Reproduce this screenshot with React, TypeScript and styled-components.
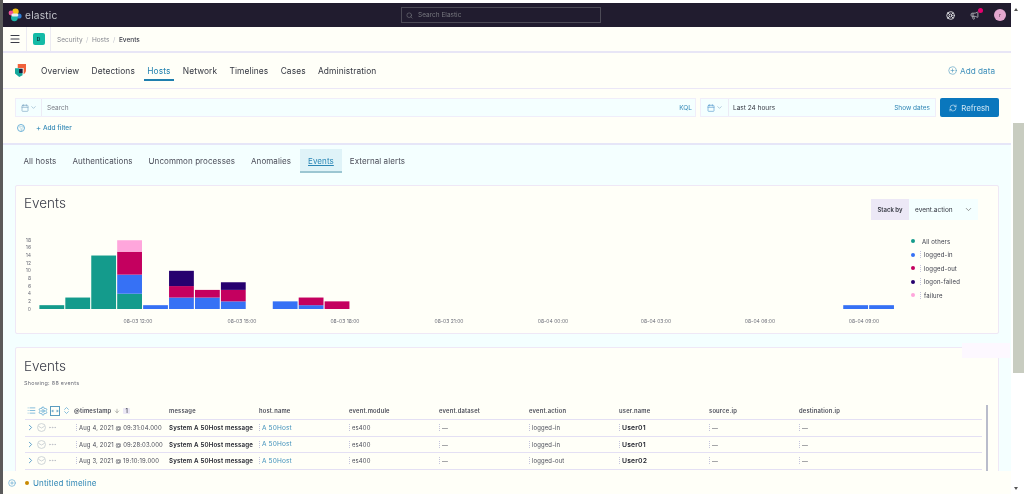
import { ChevronDown, ChevronRight, Menu, Search, Plus, RefreshCw, Calendar, ArrowDown, MoreHorizontal, Settings, ChevronsUpDown, List, Filter, CirclePlus, LifeBuoy, Megaphone } from 'lucide-react';
import styled, { createGlobalStyle } from 'styled-components';

const GlobalStyle = createGlobalStyle`
  html, body {
    margin: 0;
    height: 100%;
    overflow: hidden;
    background: #ffffff;
  }
  #root {
    height: 100%;
  }
  * {
    box-sizing: border-box;
  }
`;

const navLinks = ['Overview', 'Detections', 'Hosts', 'Network', 'Timelines', 'Cases', 'Administration'];
const tabs = ['All hosts', 'Authentications', 'Uncommon processes', 'Anomalies', 'Events', 'External alerts'];

const palette = {
  teal: '#149b8c',
  blue: '#3671f5',
  crimson: '#c4005f',
  navy: '#26006f',
  pink: '#ffa6dc',
};

type Segment = [keyof typeof palette, number];

const histogram: { slot: number; parts: Segment[] }[] = [
  { slot: 0, parts: [['teal', 1]] },
  { slot: 1, parts: [['teal', 3]] },
  { slot: 2, parts: [['teal', 14]] },
  { slot: 3, parts: [['teal', 4], ['blue', 5], ['crimson', 6], ['pink', 3]] },
  { slot: 4, parts: [['blue', 1]] },
  { slot: 5, parts: [['blue', 3], ['crimson', 3], ['navy', 4]] },
  { slot: 6, parts: [['blue', 3], ['crimson', 2]] },
  { slot: 7, parts: [['blue', 2], ['crimson', 3], ['navy', 2]] },
  { slot: 9, parts: [['blue', 2]] },
  { slot: 10, parts: [['blue', 1], ['crimson', 2]] },
  { slot: 11, parts: [['crimson', 2]] },
  { slot: 31, parts: [['blue', 1]] },
  { slot: 32, parts: [['blue', 1]] },
];

const xTicks = [
  ['08-03 12:00', 122],
  ['08-03 15:00', 226],
  ['08-03 18:00', 329],
  ['08-03 21:00', 433],
  ['08-04 00:00', 537],
  ['08-04 03:00', 640],
  ['08-04 06:00', 744],
  ['08-04 09:00', 848],
] as const;

const legend: { color: keyof typeof palette; label: string; plain?: boolean }[] = [
  { color: 'teal', label: 'All others', plain: true },
  { color: 'blue', label: 'logged-in' },
  { color: 'crimson', label: 'logged-out' },
  { color: 'navy', label: 'logon-failed' },
  { color: 'pink', label: 'failure' },
];

const columns = ['message', 'host.name', 'event.module', 'event.dataset', 'event.action', 'user.name', 'source.ip', 'destination.ip'];

const rows = [
  { time: 'Aug 4, 2021 @ 09:31:04.000', action: 'logged-in', user: 'User01' },
  { time: 'Aug 4, 2021 @ 09:28:03.000', action: 'logged-in', user: 'User01' },
  { time: 'Aug 3, 2021 @ 19:10:19.000', action: 'logged-out', user: 'User02' },
];

const ElasticMark = () => (
  <svg width="14" height="14" viewBox="0 0 14 14">
    <circle cx="7.5" cy="3.6" r="3.2" fill="#f5c518" />
    <circle cx="3" cy="5" r="2.4" fill="#ee5097" />
    <circle cx="11" cy="8" r="2.6" fill="#2f7fd6" />
    <circle cx="6.4" cy="9.8" r="3.4" fill="#1bb5a8" />
    <rect x="3.4" y="5.4" width="7" height="3" rx="1.5" fill="#e8edf0" />
  </svg>
);

const SecurityMark = () => (
  <svg width="11" height="13" viewBox="0 0 12 14">
    <path d="M3 0h9v6.5c0 2.2-1 3.6-2.6 4.6V4.2H3z" fill="#f0613a" />
    <path d="M0 4.6h4.4v5.2h3.8v2.4L4.6 14 0 10.2z" fill="#14a89c" />
    <rect x="4.4" y="5" width="4" height="4.8" fill="#1a1c3a" />
  </svg>
);

const ExpandBox = () => (
  <svg width="10" height="10" viewBox="0 0 10 10" fill="none" stroke="#5a9cc0" strokeWidth="1">
    <rect x="0.5" y="0.5" width="9" height="9" />
    <path d="M2 5h2M2.8 3.8 1.8 5l1 1.2M8 5H6M7.2 3.8 8.2 5l-1 1.2" strokeWidth="0.8" />
  </svg>
);

const EventIcon = () => (
  <svg width="9" height="9" viewBox="0 0 10 10" fill="none" stroke="#c3cbd0" strokeWidth="0.9">
    <circle cx="5" cy="5" r="4.4" />
    <path d="M1.6 3.6 5 5.6l3.4-2" />
  </svg>
);

const HitsChart = () => {
  const slotWidth = 25.93;
  const unit = 3.82;
  const baseY = 87;

  return (
    <svg width="890" height="104" viewBox="0 0 890 104">
      {[0, 2, 4, 6, 8, 10, 12, 14, 16, 18].map((tick) => (
        <ChartLabel key={tick} x="15" y={baseY + 1.5 - tick * unit} textAnchor="end">
          {tick}
        </ChartLabel>
      ))}
      {histogram.map(({ slot, parts }) => {
        let top = baseY;
        return parts.map(([color, count]) => {
          const h = count * unit;
          top -= h;
          return (
            <rect
              key={`${slot}-${color}`}
              x={23.4 + slot * slotWidth}
              y={top}
              width={24.8}
              height={h}
              fill={palette[color]}
            />
          );
        });
      })}
      {xTicks.map(([label, x]) => (
        <ChartLabel key={label} x={x} y="100.5" textAnchor="middle">
          {label}
        </ChartLabel>
      ))}
    </svg>
  );
};

const App = () => {
  return (
    <Page>
      <GlobalStyle />
      <Column>
        <TopBar>
          <Brand>
            <ElasticMark />
            <BrandName>elastic</BrandName>
          </Brand>
          <GlobalSearch>
            <Search size={7} color="#77787f" />
            <span>Search Elastic</span>
          </GlobalSearch>
          <TopIcons>
            <LifeBuoy size={9} color="#d8d8dc" strokeWidth={2.6} />
            <NewsIcon>
              <Megaphone size={9} color="#a6a6ac" strokeWidth={2.6} />
              <Badge />
            </NewsIcon>
            <Avatar>r</Avatar>
          </TopIcons>
        </TopBar>

        <CrumbBar>
          <MenuCell>
            <Menu size={12} color="#3a3c48" strokeWidth={2.2} />
          </MenuCell>
          <SpaceCell>
            <SpaceBadge>D</SpaceBadge>
          </SpaceCell>
          <Crumbs>
            <Crumb>Security</Crumb>
            <Slash>/</Slash>
            <Crumb>Hosts</Crumb>
            <Slash>/</Slash>
            <Crumb $current>Events</Crumb>
          </Crumbs>
        </CrumbBar>

        <NavBar>
          <SecurityMark />
          <NavLinks>
            {navLinks.map((link) => (
              <NavLink key={link} $active={link === 'Hosts'}>
                {link}
              </NavLink>
            ))}
          </NavLinks>
          <AddData>
            <CirclePlus size={9} strokeWidth={1.5} />
            Add data
          </AddData>
        </NavBar>

        <QueryPanel>
          <QueryRow>
            <SearchField>
              <FieldPrefix>
                <Calendar size={8} color="#7fa8c4" />
                <ChevronDown size={7} color="#7fa8c4" />
              </FieldPrefix>
              <Placeholder>Search</Placeholder>
              <Kql>KQL</Kql>
            </SearchField>
            <DateField>
              <DatePrefix>
                <Calendar size={8} color="#5d9fd0" />
                <ChevronDown size={7} color="#7fa8c4" />
              </DatePrefix>
              <DateText>Last 24 hours</DateText>
              <ShowDates>Show dates</ShowDates>
            </DateField>
            <RefreshButton>
              <RefreshCw size={8} />
              Refresh
            </RefreshButton>
          </QueryRow>
          <FilterRow>
            <FilterIcon>
              <Filter size={5} />
            </FilterIcon>
            <AddFilter>
              <Plus size={5} strokeWidth={3} />
              Add filter
            </AddFilter>
          </FilterRow>
        </QueryPanel>

        <Content>
          <TabRow>
            {tabs.map((tab) => (
              <Tab key={tab} $active={tab === 'Events'}>
                {tab}
              </Tab>
            ))}
          </TabRow>

          <ChartCard>
            <CardHead>
              <CardTitle>Events</CardTitle>
              <StackSelect>
                <StackLabel>Stack by</StackLabel>
                <StackValue>
                  event.action
                  <ChevronDown size={9} color="#777" />
                </StackValue>
              </StackSelect>
            </CardHead>
            <ChartRow>
              <HitsChart />
              <Legend>
                {legend.map(({ color, label, plain }) => (
                  <LegendItem key={label}>
                    <Dot $color={palette[color]} />
                    {!plain && <LegendGrip />}
                    {label}
                  </LegendItem>
                ))}
              </Legend>
            </ChartRow>
          </ChartCard>

          <TableCard>
            <CardTitle>Events</CardTitle>
            <Showing>Showing: 88 events</Showing>
            <TableWrap>
              <Table>
                <HeadRow>
                  <Tools>
                    <List size={9} color="#5fa8d3" />
                    <Settings size={10} color="#5fa8d3" />
                    <ExpandBox />
                    <ChevronsUpDown size={9} color="#5fa8d3" />
                  </Tools>
                  <SortCell>
                    @timestamp
                    <ArrowDown size={6} color="#777" />
                    <SortCount>1</SortCount>
                  </SortCell>
                  {columns.map((col) => (
                    <HeadCell key={col}>{col}</HeadCell>
                  ))}
                </HeadRow>
                {rows.map((row) => (
                  <Row key={row.time}>
                    <RowTools>
                      <ChevronRight size={9} color="#4d97c6" strokeWidth={2.4} />
                      <EventIcon />
                      <MoreHorizontal size={9} color="#b9bcc4" />
                    </RowTools>
                    <TimeCell>
                      <Grip />
                      {row.time}
                    </TimeCell>
                    <MessageCell>System A 50Host message</MessageCell>
                    <Cell>
                      <Grip />
                      <HostLink>A 50Host</HostLink>
                    </Cell>
                    <Cell>
                      <Grip />
                      es400
                    </Cell>
                    <Cell>
                      <Grip />—
                    </Cell>
                    <Cell>
                      <Grip />
                      {row.action}
                    </Cell>
                    <Cell>
                      <Grip />
                      <UserName>{row.user}</UserName>
                    </Cell>
                    <Cell>
                      <Grip />—
                    </Cell>
                    <Cell>
                      <Grip />—
                    </Cell>
                  </Row>
                ))}
              </Table>
              <TableScroll />
            </TableWrap>
          </TableCard>
          <CornerPatch />
        </Content>

        <TimelineBar>
          <CirclePlus size={8} color="#5fa8d3" />
          <StatusDot />
          <TimelineName>Untitled timeline</TimelineName>
        </TimelineBar>
      </Column>

      <Scrollbar>
        <ArrowUp />
        <Thumb />
        <ArrowDownMark />
      </Scrollbar>
    </Page>
  );
};

const Page = styled.div`
  display: flex;
  width: 1024px;
  height: 494px;
  overflow: hidden;
  padding-top: 3px;
  border-left: 3px solid #5a5a5a;
  background: #ffffff;
  font-family: Inter, 'Liberation Sans', sans-serif;
  color: #343741;
  filter: blur(0.35px);
`;

const Column = styled.div`
  display: flex;
  flex-direction: column;
  width: 1008px;
  height: 491px;
`;

const TopBar = styled.header`
  flex: 0 0 24px;
  display: grid;
  grid-template-columns: 393px 200px 1fr;
  align-items: center;
  padding: 0 5px 0 5px;
  background: #211c2f;
`;

const Brand = styled.div`
  display: flex;
  align-items: center;
  gap: 3px;
`;

const BrandName = styled.span`
  font-size: 10.2px;
  color: #c4c5cc;
  letter-spacing: 0.2px;
`;

const GlobalSearch = styled.div`
  display: flex;
  align-items: center;
  gap: 5px;
  height: 16px;
  padding-left: 4px;
  border: 1px solid #4c4a56;
  background: #211c2f;
  font-size: 6.5px;
  color: #77787f;
`;

const TopIcons = styled.div`
  display: flex;
  align-items: center;
  justify-content: flex-end;
  gap: 15px;
`;

const NewsIcon = styled.span`
  position: relative;
  display: flex;
`;

const Badge = styled.span`
  position: absolute;
  top: -3px;
  right: -4px;
  width: 5px;
  height: 5px;
  border-radius: 50%;
  background: #e6006e;
`;

const Avatar = styled.span`
  display: flex;
  align-items: center;
  justify-content: center;
  width: 12px;
  height: 12px;
  border-radius: 50%;
  background: #e3a6cf;
  font-size: 5px;
  color: #4a3040;
`;

const CrumbBar = styled.div`
  flex: 0 0 26px;
  display: flex;
  align-items: stretch;
  border-bottom: 2px solid #e8e6f6;
  background: #fffff8;
`;

const MenuCell = styled.div`
  display: flex;
  align-items: center;
  justify-content: center;
  width: 24px;
  border-right: 1px solid #ecebf2;
`;

const SpaceCell = styled.div`
  display: flex;
  align-items: center;
  justify-content: center;
  width: 24px;
  border-right: 1px solid #ecebf2;
`;

const SpaceBadge = styled.span`
  display: flex;
  align-items: center;
  justify-content: center;
  width: 12px;
  height: 12px;
  border-radius: 2px;
  background: #14bba6;
  font-size: 5px;
  font-weight: 600;
  color: #123;
`;

const Crumbs = styled.div`
  display: flex;
  align-items: center;
  gap: 3.5px;
  padding: 2px 0 0 6px;
  font-size: 6.5px;
`;

const Crumb = styled.span<{ $current?: boolean }>`
  color: ${(p) => (p.$current ? '#3a3c48' : '#85878f')};
  font-weight: ${(p) => (p.$current ? 500 : 400)};
`;

const Slash = styled.span`
  color: #c4c6cf;
`;

const NavBar = styled.nav`
  flex: 0 0 36px;
  display: flex;
  align-items: center;
  padding: 0 16px 0 12px;
  border-bottom: 1px solid #ebe7f7;
  background: #fffff8;
`;

const NavLinks = styled.div`
  display: flex;
  align-items: center;
  gap: 10.3px;
  margin-left: 14px;
  flex: 1;
`;

const NavLink = styled.span<{ $active: boolean }>`
  position: relative;
  padding: 0 1px;
  font-size: 8.4px;
  letter-spacing: 0.1px;
  color: ${(p) => (p.$active ? '#1f7fae' : '#343741')};

  &::after {
    content: '';
    display: ${(p) => (p.$active ? 'block' : 'none')};
    position: absolute;
    left: -2px;
    right: -2px;
    bottom: -5px;
    height: 1.3px;
    background: #1f7fae;
  }
`;

const AddData = styled.span`
  display: flex;
  align-items: center;
  gap: 3px;
  font-size: 8.2px;
  color: #3f90bb;
`;

const QueryPanel = styled.div`
  flex: 0 0 56px;
  padding: 9px 12px 0 12px;
  border-bottom: 2px solid #e6e6f8;
  background: #fffff8;
`;

const QueryRow = styled.div`
  display: flex;
  gap: 4px;
  height: 19px;
`;

const SearchField = styled.div`
  display: flex;
  align-items: center;
  width: 681px;
  padding-right: 3px;
  border: 1px solid #f0eefa;
  background: #f4ffff;
`;

const FieldPrefix = styled.div`
  display: flex;
  align-items: center;
  justify-content: center;
  gap: 1px;
  align-self: stretch;
  width: 26px;
  border-right: 1px solid #ecebf5;
`;

const DatePrefix = styled(FieldPrefix)`
  width: 28px;
`;

const Placeholder = styled.span`
  flex: 1;
  padding-left: 5px;
  font-size: 6.5px;
  color: #7a7c85;
`;

const Kql = styled.span`
  font-size: 6.5px;
  color: #2f86b5;
`;

const DateField = styled.div`
  display: flex;
  align-items: center;
  width: 236px;
  padding-right: 5px;
  border: 1px solid #f0eefa;
  background: #f4ffff;
`;

const DateText = styled.span`
  flex: 1;
  padding-left: 4px;
  font-size: 6.5px;
  color: #343741;
`;

const ShowDates = styled.span`
  font-size: 6.5px;
  color: #2f86b5;
`;

const RefreshButton = styled.div`
  display: flex;
  align-items: center;
  justify-content: center;
  gap: 4px;
  width: 59px;
  border-radius: 2px;
  background: #0a77bd;
  font-size: 7.8px;
  color: #cfe6f4;
`;

const FilterRow = styled.div`
  display: flex;
  align-items: center;
  gap: 11px;
  margin-top: 7px;
  padding-left: 2px;
`;

const FilterIcon = styled.span`
  display: flex;
  align-items: center;
  justify-content: center;
  width: 8px;
  height: 8px;
  border: 1px solid #6fb3d9;
  border-radius: 50%;
  color: #6fb3d9;
`;

const AddFilter = styled.span`
  display: flex;
  align-items: center;
  gap: 2px;
  font-size: 6.5px;
  font-weight: 500;
  color: #2f86b5;
`;

const Content = styled.main`
  position: relative;
  flex: 1;
  min-height: 0;
  overflow: hidden;
  padding: 4px 12px 0 12px;
  background: #f4ffff;
`;

const TabRow = styled.div`
  display: flex;
  height: 24px;
  padding-left: 1px;
`;

const Tab = styled.span<{ $active: boolean }>`
  display: flex;
  align-items: center;
  padding: 1px ${(p) => (p.$active ? '8.5px' : '7.5px')} 0;
  margin-right: ${(p) => (p.$active ? '0' : '1px')};
  border-bottom: 2px solid ${(p) => (p.$active ? '#9cc6d2' : 'transparent')};
  background: ${(p) => (p.$active ? '#dff3f8' : 'transparent')};
  font-size: 8px;
  letter-spacing: 0.08px;
  color: ${(p) => (p.$active ? '#2a86b5' : '#4a4c58')};
  text-decoration: ${(p) => (p.$active ? 'underline' : 'none')};
`;

const ChartCard = styled.section`
  height: 149px;
  margin-top: 12px;
  padding: 8px 0 0 8px;
  border: 1px solid #efe8f6;
  border-radius: 2px;
  background: #fffff8;
`;

const CardHead = styled.div`
  display: flex;
  align-items: flex-start;
  justify-content: space-between;
  padding-right: 20px;
`;

const CardTitle = styled.h2`
  margin: 0;
  font-size: 13.5px;
  font-weight: 300;
  line-height: 18px;
  color: #3a3c48;
`;

const StackSelect = styled.div`
  display: flex;
  height: 21px;
  width: 107px;
  margin-top: 5px;
  background: #f4ffff;
`;

const StackLabel = styled.span`
  display: flex;
  align-items: center;
  justify-content: center;
  width: 38px;
  background: #ece8f6;
  font-size: 6px;
  font-weight: 600;
  color: #343741;
`;

const StackValue = styled.span`
  flex: 1;
  display: flex;
  align-items: center;
  justify-content: space-between;
  padding: 0 5px 0 6px;
  font-size: 6.5px;
  color: #343741;
`;

const ChartRow = styled.div`
  display: flex;
  margin: 2px 0 0 -8px;
`;

const ChartLabel = styled.text`
  font-family: Inter, 'Liberation Sans', sans-serif;
  font-size: 5px;
  fill: #6b6d78;
`;

const Legend = styled.ul`
  display: flex;
  flex-direction: column;
  gap: 5.5px;
  margin: 0 0 0 5px;
  padding: 15px 0 0 0;
  list-style: none;
`;

const LegendItem = styled.li`
  display: flex;
  align-items: center;
  height: 8px;
  font-size: 6px;
  letter-spacing: 0.15px;
  color: #3a3c48;
`;

const Dot = styled.span<{ $color: string }>`
  width: 4px;
  height: 4px;
  margin-right: 7px;
  border-radius: 50%;
  background: ${(p) => p.$color};
`;

const Grip = styled.span`
  flex: none;
  width: 1px;
  height: 7px;
  margin-right: 2px;
  border-left: 1px dotted #c4c4dc;
`;

const LegendGrip = styled(Grip)`
  margin-left: -2px;
  margin-right: 3px;
`;

const TableCard = styled.section`
  height: 140px;
  margin-top: 13px;
  padding: 9px 0 0 8px;
  border: 1px solid #efe8f6;
  border-radius: 2px;
  background: #fffff8;
`;

const Showing = styled.div`
  margin-top: 5px;
  font-size: 5.4px;
  letter-spacing: 0.3px;
  color: #6b6d78;
`;

const TableWrap = styled.div`
  display: flex;
  margin: 16px 0 0 1px;
`;

const Table = styled.div`
  width: 957px;
`;

const rowGrid = `
  display: grid;
  grid-template-columns: 49px 95px repeat(8, 90px);
  align-items: center;
`;

const HeadRow = styled.div`
  ${rowGrid}
  height: 18px;
  border-bottom: 1px solid #e4e0f4;
  font-size: 5.8px;
  font-weight: 600;
  letter-spacing: 0.2px;
  color: #4a4c58;
`;

const Tools = styled.div`
  display: flex;
  align-items: center;
  gap: 2px;
  padding-left: 2px;
`;

const SortCell = styled.div`
  display: flex;
  align-items: center;
  gap: 3px;
`;

const SortCount = styled.span`
  padding: 0 2px;
  border-radius: 1px;
  background: #ece8f6;
  font-size: 5.5px;
`;

const HeadCell = styled.div`
  white-space: nowrap;
`;

const Row = styled.div`
  ${rowGrid}
  height: 16.5px;
  border-bottom: 1px solid #e4e0f4;
  font-size: 5.9px;
  letter-spacing: 0.15px;
  color: #4a4c58;
`;

const RowTools = styled.div`
  display: flex;
  align-items: center;
  gap: 2px;
  padding-left: 1px;
`;

const TimeCell = styled.div`
  display: flex;
  align-items: center;
  white-space: nowrap;
  padding-left: 2px;
`;

const MessageCell = styled.div`
  white-space: nowrap;
  font-size: 6.2px;
  font-weight: 600;
  color: #22242e;
`;

const Cell = styled.div`
  display: flex;
  align-items: center;
  white-space: nowrap;
`;

const HostLink = styled.span`
  color: #3f90bb;
  font-size: 6.5px;
`;

const UserName = styled.span`
  font-size: 6.8px;
  font-weight: 600;
  color: #22242e;
`;

const TableScroll = styled.div`
  width: 2px;
  height: 68px;
  margin: 3px 0 0 4px;
  background: #b9bccb;
`;

const CornerPatch = styled.div`
  position: absolute;
  top: 198px;
  right: 1px;
  width: 48px;
  height: 15px;
  background: #fdf8ff;
`;

const TimelineBar = styled.footer`
  flex: 0 0 23px;
  display: flex;
  align-items: center;
  padding-left: 5px;
  background: #fffff8;
`;

const StatusDot = styled.span`
  width: 4px;
  height: 4px;
  margin: 0 4px 0 9px;
  border-radius: 50%;
  background: #c98a00;
`;

const TimelineName = styled.span`
  font-size: 8px;
  letter-spacing: 0.15px;
  color: #2f86b5;
`;

const Scrollbar = styled.aside`
  position: relative;
  flex: 1;
  display: flex;
  flex-direction: column;
  align-items: stretch;
  padding-top: 120px;
  background: #ffffff;
`;

const Thumb = styled.div`
  height: 250px;
  margin-left: 2px;
  background: #c8ccc0;
`;

const ArrowUp = styled.span`
  position: absolute;
  top: 5px;
  left: 3px;
  border-left: 2.5px solid transparent;
  border-right: 2.5px solid transparent;
  border-bottom: 3px solid #555;
`;

const ArrowDownMark = styled.span`
  position: absolute;
  bottom: 4px;
  left: 3px;
  border-left: 2.5px solid transparent;
  border-right: 2.5px solid transparent;
  border-top: 3px solid #555;
`;

export default App;
